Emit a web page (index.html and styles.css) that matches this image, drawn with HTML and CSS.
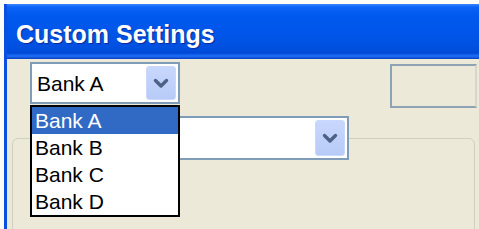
FILE: index.html
```html
<!DOCTYPE html>
<html lang="en">

<head>
    <meta charset="UTF-8">
    <meta name="viewport" content="width=device-width, initial-scale=1.0">
    <title>Custom Settings</title>
    <link rel="stylesheet" href="styles.css">
</head>

<body>
    <div class="window">
        <div class="titlebar">Custom Settings</div>
        <div class="content">
            <div class="toprow">
                <div class="combo combo-bank">
                    <span class="combo-text">Bank A</span>
                    <span class="combo-btn">
                        <svg width="16" height="11" viewBox="0 0 16 11">
                            <path d="M2.5 2.5 L8 8 L13.5 2.5" fill="none" stroke="#4d6185" stroke-width="3.4" stroke-linecap="round" stroke-linejoin="round"/>
                        </svg>
                    </span>
                    <ul class="droplist">
                        <li class="selected">Bank A</li>
                        <li>Bank B</li>
                        <li>Bank C</li>
                        <li>Bank D</li>
                    </ul>
                </div>
                <div class="textbox"></div>
            </div>
            <fieldset class="group">
                <legend>
                    <div class="combo combo-wide">
                        <span class="combo-text"></span>
                        <span class="combo-btn">
                            <svg width="16" height="11" viewBox="0 0 16 11">
                                <path d="M2.5 2.5 L8 8 L13.5 2.5" fill="none" stroke="#4d6185" stroke-width="3.4" stroke-linecap="round" stroke-linejoin="round"/>
                            </svg>
                        </span>
                    </div>
                </legend>
            </fieldset>
        </div>
    </div>
</body>

</html>
```

FILE: styles.css
```css
body {
    margin: 0;
    background-color: #fbfbf8;
    font-family: 'Liberation Sans', Arial, sans-serif;
}

.window {
    margin: 4px 0 0 4px;
    height: 225px;
    overflow: hidden;
    border-left: 3px solid #0a4fe0;
    background-color: #ece9d8;
}

.titlebar {
    height: 50px;
    padding: 5px 0 0 9px;
    line-height: 50px;
    color: #fff;
    font-size: 25px;
    font-weight: bold;
    text-shadow: 1px 1px 1px #0a2a9a;
    background: linear-gradient(#3a86ff 0px, #0a62f6 3px, #0059ef 12px, #0055e8 30px, #0050e0 44px, #0048d6 49px, #1f70f8 52px, #0a3fc0 55px);
}

.content {
    padding-left: 5px;
}

.toprow {
    display: flex;
    align-items: flex-start;
    padding: 3px 0 0 18px;
}

.combo {
    position: relative;
    display: flex;
    align-items: center;
    box-sizing: border-box;
    border: 2px solid #7f9db9;
    background-color: #fff;
}

.combo-bank {
    width: 150px;
    height: 42px;
}

.combo-wide {
    width: 319px;
    height: 44px;
}

.combo-text {
    flex: 1;
    padding: 2px 0 0 5px;
    font-size: 21px;
    color: #000;
}

.combo-btn {
    display: flex;
    align-items: center;
    justify-content: center;
    width: 30px;
    height: 34px;
    margin-right: 2px;
    border: 1px solid #c9d8fb;
    border-radius: 3px;
    box-sizing: border-box;
    background: linear-gradient(#c8d7fd, #b7cbf7);
}

.combo-wide .combo-btn {
    height: 36px;
}

.droplist {
    position: absolute;
    z-index: 2;
    top: 41px;
    left: -2px;
    width: 150px;
    margin: 0;
    padding: 0;
    box-sizing: border-box;
    border: 2px solid #000;
    background-color: #fff;
    list-style: none;
}

.droplist li {
    height: 27px;
    line-height: 27px;
    padding-left: 3px;
    font-size: 21px;
    color: #000;
}

.droplist li.selected {
    background-color: #316ac5;
    color: #fff;
}

.textbox {
    width: 87px;
    height: 44px;
    margin: 2px 2px 0 auto;
    box-sizing: border-box;
    border: 2px solid #8da2b4;
    border-right-color: #d6d6cc;
}

.group {
    height: 120px;
    margin: 8px 4px 0 0;
    padding: 0 0 0 17px;
    border: 1px solid #d0d0bf;
    border-radius: 6px;
}

.group legend {
    padding: 0;
}
```
